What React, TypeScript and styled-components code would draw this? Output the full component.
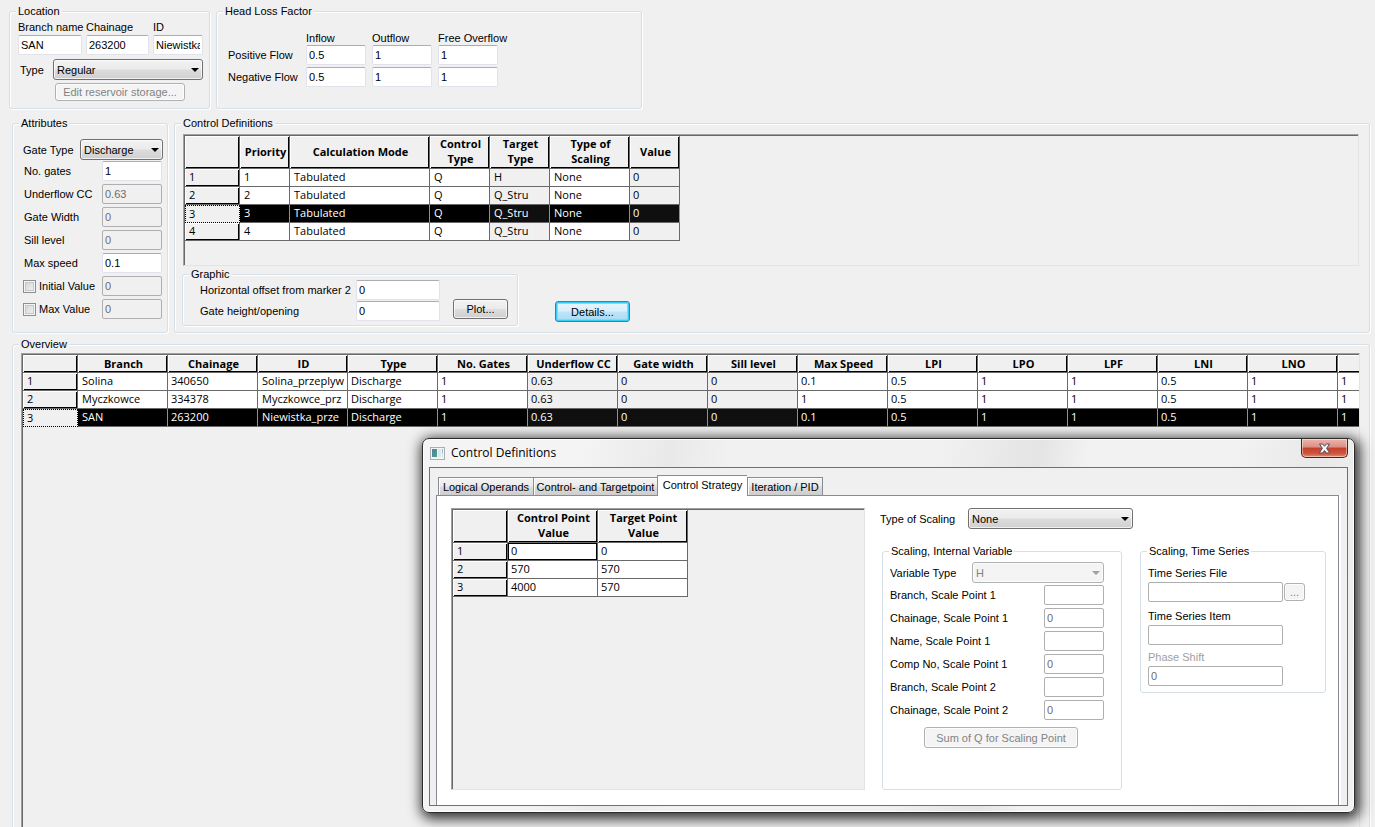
import React, { useId } from "react";
import styled, { createGlobalStyle, css } from "styled-components";

const FACE = "#f0f0f0";
const UI_FONT = '"Liberation Sans", Arial, sans-serif';
const GRID_FONT = '"Open Sans", "Noto Sans", sans-serif';

const GlobalStyle = createGlobalStyle`
  *, *::before, *::after { box-sizing: border-box; }
  body {
    margin: 0;
    background: ${FACE};
    color: #000;
    font: 11px/14px ${UI_FONT};
  }
  input, select, button { font: inherit; color: inherit; margin: 0; }
`;

/* ---------- page structure ---------- */

const Screen = styled.main`
  position: relative;
  height: 100vh;
  padding: 4px 5px 0 9px;
  display: flex;
  flex-direction: column;
  gap: 7px;
  overflow: hidden;
`;

const TopRow = styled.div`
  display: flex;
  gap: 6px;
  flex: none;
`;

const MiddleRow = styled(TopRow)`
  padding-left: 3px;
`;

const OverviewRow = styled(MiddleRow)`
  margin-top: -3px;
`;

/* ---------- group box ---------- */

const Group = styled.fieldset<{ $width?: number; $height?: number; $plain?: boolean }>`
  margin: 0;
  padding: 0;
  min-width: 0;
  border: 1px solid #d5dfe5;
  border-radius: 3px;
  ${(p) => (p.$width ? `flex: none; width: ${p.$width}px;` : "flex: 1;")}
  ${(p) => p.$height && `min-height: ${p.$height}px;`}
  ${(p) => !p.$plain && "box-shadow: 1px 1px 0 #fff, inset 1px 1px 0 #fff;"}
`;

const Legend = styled.legend<{ $plain?: boolean }>`
  margin-left: 6px;
  padding: 0 2px;
  line-height: 15px;
  background: ${(p) => (p.$plain ? "#fff" : FACE)};
`;

/* ---------- controls ---------- */

const TextBox = styled.input<{ $paper?: boolean }>`
  width: 100%;
  min-width: 0;
  height: 20px;
  padding: 0 2px;
  border: 1px solid #e2e3ea;
  border-top-color: #abadb3;
  border-radius: 2px;
  background: #fff;
  outline: none;
  &:disabled {
    border-color: #afafaf;
    background: ${(p) => (p.$paper ? "#fff" : FACE)};
    color: #6d6d6d;
  }
`;

const SelectFrame = styled.span<{ $disabled?: boolean }>`
  position: relative;
  display: block;
  &::after {
    content: "";
    position: absolute;
    right: 4px;
    top: 9px;
    border: 4px solid transparent;
    border-top-color: ${(p) => (p.$disabled ? "#a0a0a0" : "#000")};
    border-bottom: 0;
    pointer-events: none;
  }
`;

const SelectBox = styled.select`
  appearance: none;
  display: block;
  width: 100%;
  height: 21px;
  padding: 0 14px 0 3px;
  border: 1px solid #707070;
  border-radius: 3px;
  background: linear-gradient(#f2f2f2, #ebebeb 48%, #dddddd 52%, #cfcfcf);
  box-shadow: inset 0 0 0 1px rgba(255, 255, 255, 0.7);
  outline: none;
  &:disabled {
    border-color: #adb2b5;
    background: #f4f4f4;
    color: #838383;
    opacity: 1;
  }
`;

const PushButton = styled.button<{ $primary?: boolean }>`
  height: 20px;
  padding: 0;
  border: 1px solid #707070;
  border-radius: 3px;
  background: linear-gradient(#f2f2f2, #ebebeb 48%, #dddddd 52%, #cfcfcf);
  box-shadow: inset 0 0 0 1px rgba(255, 255, 255, 0.7);
  white-space: nowrap;
  ${(p) =>
    p.$primary &&
    css`
      height: 21px;
      border-color: #3c7fb1;
      background: linear-gradient(#e9f5fc, #d8effb 48%, #bde5f9 52%, #aad9f2);
      box-shadow: inset 0 0 0 1px #35cdf8, inset 0 0 0 2px #7fdcf8;
    `}
  &:disabled {
    border-color: #adb2b5;
    background: #f4f4f4;
    color: #838383;
  }
`;

const CheckBox = styled.input`
  appearance: none;
  width: 13px;
  height: 13px;
  border: 1px solid #8e8f8f;
  background: linear-gradient(135deg, #cbcfd5, #f6f6f6);
  box-shadow: inset 0 0 0 1px #f4f4f4, inset 0 0 0 2px #c4c8cd;
`;

const Caption = styled.label<{ $muted?: boolean }>`
  white-space: nowrap;
  color: ${(p) => (p.$muted ? "#a0a0a0" : "inherit")};
`;

/* ---------- location and head loss ---------- */

const LocationBody = styled.div`
  padding: 1px 5px 7px 8px;
`;

const LocationFields = styled.div`
  display: grid;
  grid-template-columns: 64px 63px 50px;
  column-gap: 4px;
  row-gap: 1px;
`;

const TypeRow = styled.div`
  display: grid;
  grid-template-columns: 33px 150px;
  align-items: center;
  padding-left: 2px;
  margin: 4px 0 3px;
`;

const ReservoirButton = styled(PushButton)`
  display: block;
  width: 130px;
  height: 18px;
  margin-left: 37px;
`;

const LossTable = styled.div`
  display: grid;
  grid-template-columns: 72px repeat(3, 60px);
  grid-template-rows: 26px 22px 20px;
  column-gap: 6px;
  align-items: start;
  padding-left: 11px;
`;

const LossHead = styled.span`
  align-self: end;
  white-space: nowrap;
  line-height: 13px;
`;

const LossLabel = styled.span`
  white-space: nowrap;
  line-height: 20px;
`;

/* ---------- attributes ---------- */

const AttributeBody = styled.div`
  padding: 8px 4px 0 10px;
`;

const GateTypeRow = styled.div`
  display: grid;
  grid-template-columns: 57px 83px;
  align-items: center;
  margin-bottom: 1px;
`;

const FieldRow = styled.div<{ $box: number }>`
  display: grid;
  grid-template-columns: 1fr ${(p) => p.$box}px;
  align-items: start;
  height: 23px;
  padding: 0 1px;
  line-height: 20px;
`;

const CheckCaption = styled.span`
  display: flex;
  align-items: center;
  gap: 3px;
  height: 20px;
  margin-left: -1px;
`;

/* ---------- data grids ---------- */

const GridPanel = styled.div<{ $height: number; $width?: number }>`
  ${(p) => (p.$width ? `flex: none; width: ${p.$width}px;` : "")}
  height: ${(p) => p.$height}px;
  border: 1px solid #e3e3e3;
  border-top-color: #a0a0a0;
  border-left-color: #a0a0a0;
  box-shadow: inset 1px 1px 0 #696969;
  padding: 1px 0 0 1px;
  background: ${FACE};
  overflow: hidden;
`;

const DataTable = styled.table`
  table-layout: fixed;
  width: 0;
  border-collapse: separate;
  border-spacing: 0;
  font: 11px/15px ${GRID_FONT};
`;

const HeadCell = styled.th<{ $tall?: boolean }>`
  height: ${(p) => (p.$tall ? 33 : 18)}px;
  padding: 0 0 ${(p) => (p.$tall ? 2 : 0)}px 2px;
  font-weight: 700;
  text-align: center;
  border: solid #696969;
  border-width: 0 1px 1px 0;
  box-shadow: inset 1px 1px 0 #fff, inset -1px -1px 0 #000;
  white-space: ${(p) => (p.$tall ? "pre-line" : "nowrap")};
  overflow: hidden;
`;

const RowHead = styled.th<{ $active?: boolean }>`
  height: 18px;
  padding: 0 0 2px 4px;
  font-weight: 400;
  text-align: left;
  border: solid #696969;
  border-width: 0 1px 1px 0;
  box-shadow: inset 1px 1px 0 #fff, inset -1px -1px 0 #000;
  ${(p) =>
    p.$active &&
    css`
      border: 1px dotted #000;
      padding: 0 0 1px 3px;
      box-shadow: none;
    `}
`;

const Cell = styled.td<{ $locked?: boolean; $selected?: boolean; $current?: boolean; $tight?: boolean }>`
  height: 18px;
  padding: 0 0 2px ${(p) => (p.$tight ? 3 : 4)}px;
  border: solid #696969;
  border-width: 0 1px 1px 0;
  white-space: nowrap;
  overflow: hidden;
  background: ${(p) => (p.$selected ? (p.$locked ? "#0f0f0f" : "#000") : p.$locked ? FACE : "#fff")};
  color: ${(p) => (p.$selected ? "#fff" : "#000")};
  ${(p) => p.$selected && "border-right-color: #909090;"}
  ${(p) => p.$current && "box-shadow: inset 0 0 0 1px #000;"}
`;

type Column = { title: string; width: number; locked?: boolean; tight?: boolean };

type DataGridProps = {
  label: string;
  columns: Column[];
  rows: string[][];
  tall?: boolean;
  selected?: number;
  current?: boolean;
};

function DataGrid({ label, columns, rows, tall, selected, current }: DataGridProps) {
  return (
    <DataTable aria-label={label}>
      <colgroup>
        <col width={55} />
        {columns.map((c, i) => (
          <col key={i} width={c.width} />
        ))}
      </colgroup>
      <thead>
        <tr>
          <HeadCell as="td" $tall={tall} />
          {columns.map((c, i) => (
            <HeadCell key={i} scope="col" $tall={tall}>
              {c.title}
            </HeadCell>
          ))}
        </tr>
      </thead>
      <tbody>
        {rows.map((row, r) => (
          <tr key={r}>
            <RowHead scope="row" $active={selected === r}>
              {r + 1}
            </RowHead>
            {row.map((value, c) => (
              <Cell
                key={c}
                $locked={columns[c].locked}
                $tight={columns[c].tight}
                $selected={selected === r}
                $current={current && r === 0 && c === 0}
              >
                {value}
              </Cell>
            ))}
          </tr>
        ))}
      </tbody>
    </DataTable>
  );
}

/* ---------- control definitions ---------- */

const ControlBody = styled.div`
  padding: 3px 10px 6px 8px;
`;

const ControlFooter = styled.div`
  display: flex;
  align-items: flex-end;
  gap: 37px;
  margin: 1px 0 0 -1px;
`;

const GraphicBody = styled.div`
  display: flex;
  align-items: flex-end;
  gap: 13px;
  margin-top: -2px;
  padding: 0 0 4px 17px;
`;

const GraphicFields = styled.div`
  display: grid;
  grid-template-columns: 156px 84px;
  grid-auto-rows: 20px;
  row-gap: 1px;
  align-items: center;
`;

const PlotButton = styled(PushButton)`
  width: 55px;
  margin-bottom: 2px;
`;

const DetailsButton = styled(PushButton)`
  width: 75px;
  margin-bottom: 4px;
`;

const OverviewBody = styled.div`
  padding: 1px 9px 8px 8px;
`;

/* ---------- dialog ---------- */

const Dialog = styled.section`
  position: absolute;
  left: 422px;
  right: 20px;
  top: 438px;
  padding: 0 6px 6px;
  border: 1px solid #2b2b2b;
  border-radius: 7px;
  background: linear-gradient(100deg, #f4f4f4 0 16%, #e9e9e9 25%, #f1f1f1 31% 52%, #e4e4e4 62%, #f2f2f2 67% 82%, #e9e9e9 90%, #f2f2f2);
  box-shadow: inset 0 0 0 1px #fff, 2px 3px 13px 3px rgba(0, 0, 0, 0.8);
`;

const TitleBar = styled.header`
  display: flex;
  align-items: center;
  gap: 6px;
  height: 28px;
  padding-left: 1px;
`;

const Title = styled.h1`
  flex: 1;
  margin: 0;
  font: 12px/16px ${GRID_FONT};
`;

const CloseButton = styled.button`
  align-self: flex-start;
  display: grid;
  place-items: center;
  width: 47px;
  height: 19px;
  padding: 0;
  border: 1px solid #5a1d16;
  border-top: 0;
  border-radius: 0 0 5px 5px;
  background: linear-gradient(#eeb5ac, #dd8f82 45%, #c3402a 50%, #d0543c 80%, #e58a72);
  box-shadow: inset 0 0 0 1px rgba(255, 255, 255, 0.45);
`;

const Client = styled.div`
  border: 1px solid #707070;
  background: ${FACE};
  padding: 7px 8px 0 6px;
`;

const TabStrip = styled.div`
  display: flex;
  align-items: flex-end;
  height: 20px;
  padding-left: 2px;
`;

const Tab = styled.button<{ $width: number; $active?: boolean }>`
  width: ${(p) => p.$width}px;
  height: 18px;
  padding: 0;
  border: 1px solid #898c95;
  border-bottom: 0;
  border-right-width: 0;
  background: linear-gradient(#f3f3f3, #ebebeb 48%, #dddddd 52%, #cdcdcd);
  box-shadow: inset 1px 1px 0 #fcfcfc;
  white-space: nowrap;
  &:last-child {
    border-right-width: 1px;
  }
  ${(p) =>
    p.$active &&
    css`
      position: relative;
      height: 21px;
      margin-bottom: -1px;
      padding-bottom: 2px;
      background: #fff;
    `}
`;

const TabPage = styled.div`
  display: flex;
  align-items: flex-start;
  gap: 15px;
  height: 310px;
  padding: 12px 12px 0 14px;
  border: 1px solid #898c95;
  border-bottom: 0;
  background: #fff;
  box-shadow: 2px 0 0 #fff;
`;

const ScalingPane = styled.div`
  flex: 1;
  min-width: 0;
`;

const ScalingRow = styled.div`
  display: grid;
  grid-template-columns: 88px 165px;
  align-items: center;
  margin-bottom: 15px;
`;

const ScalingGroups = styled.div`
  display: flex;
  align-items: flex-start;
  gap: 18px;
  padding-left: 2px;
`;

const VariableBody = styled.div`
  padding: 3px 16px 0 6px;
`;

const VariableRow = styled.div`
  display: grid;
  grid-template-columns: 1fr 132px;
  align-items: center;
  margin-bottom: 2px;
  padding: 0 1px;
`;

const SumButton = styled(PushButton)`
  display: block;
  width: 154px;
  height: 21px;
  margin: 4px 0 0 35px;
`;

const SeriesBody = styled.div`
  display: grid;
  grid-template-columns: 135px 21px;
  column-gap: 1px;
  grid-template-rows: 17px 20px 23px 20px 21px 20px;
  align-items: center;
  padding: 6px 0 0 7px;
  > label {
    grid-column: 1 / -1;
    align-self: end;
    padding-bottom: 2px;
  }
  > input { grid-column: 1; }
`;

const BrowseButton = styled(PushButton)`
  height: 18px;
  color: #838383;
`;

/* ---------- small composites ---------- */

function Select({ id, value, disabled }: { id: string; value: string; disabled?: boolean }) {
  return (
    <SelectFrame $disabled={disabled}>
      <SelectBox id={id} disabled={disabled} defaultValue={value}>
        <option>{value}</option>
      </SelectBox>
    </SelectFrame>
  );
}

type FieldProps = { label: string; value: string; disabled?: boolean; check?: boolean; paper?: boolean };

function Field({ label, value, disabled, check, paper }: FieldProps) {
  const id = useId();
  return (
    <FieldRow $box={60}>
      {check ? (
        <CheckCaption>
          <CheckBox type="checkbox" id={id + "c"} />
          <Caption htmlFor={id + "c"}>{label}</Caption>
        </CheckCaption>
      ) : (
        <Caption htmlFor={id}>{label}</Caption>
      )}
      <TextBox id={id} defaultValue={value} disabled={disabled} $paper={paper} aria-label={label} />
    </FieldRow>
  );
}

function AppIcon() {
  return (
    <svg width="15" height="13" viewBox="0 0 15 13" aria-hidden="true">
      <defs>
        <linearGradient id="pane" x1="0" y1="0" x2="1" y2="1">
          <stop offset="0" stopColor="#4f7fa8" />
          <stop offset="1" stopColor="#4fa07c" />
        </linearGradient>
      </defs>
      <rect x="0.5" y="0.5" width="14" height="12" fill="#f2f4f5" stroke="#a9afb4" />
      <rect x="2" y="2" width="5" height="8" fill="url(#pane)" />
      <rect x="8" y="2" width="3" height="8" fill="#dfe6ea" />
      <rect x="12" y="2" width="1" height="4" fill="#9fb9cc" />
      <rect x="12" y="6" width="1" height="4" fill="#d5e3dc" />
    </svg>
  );
}

function CloseIcon() {
  return (
    <svg width="13" height="11" viewBox="0 0 13 11" aria-hidden="true">
      <path
        d="M1.500 1h3.200l1.800 2.300L8.300 1h3.200L8.600 5.300 11.700 10H8.300L6.500 7.500 4.700 10H1.300l3.100-4.700z"
        fill="#f6f6f6"
        stroke="#4d4f63"
        strokeWidth="1"
      />
    </svg>
  );
}

/* ---------- data ---------- */

const controlColumns: Column[] = [
  { title: "Priority", width: 50 },
  { title: "Calculation Mode", width: 140 },
  { title: "Control\nType", width: 60 },
  { title: "Target\nType", width: 60, locked: true },
  { title: "Type of\nScaling", width: 80 },
  { title: "Value", width: 50, locked: true, tight: true },
];

const controlRows = [
  ["1", "Tabulated", "Q", "H", "None", "0"],
  ["2", "Tabulated", "Q", "Q_Stru", "None", "0"],
  ["3", "Tabulated", "Q", "Q_Stru", "None", "0"],
  ["4", "Tabulated", "Q", "Q_Stru", "None", "0"],
];

const overviewColumns: Column[] = [
  "Branch", "Chainage", "ID", "Type", "No. Gates", "Underflow CC", "Gate width", "Sill level",
  "Max Speed", "LPI", "LPO", "LPF", "LNI", "LNO", "",
].map((title, i) => ({
  title,
  width: 90,
  locked: i >= 5 && i <= 7,
  tight: title !== "Branch" && title !== "ID",
}));

const overviewRows = [
  ["Solina", "340650", "Solina_przeplyw", "Discharge", "1", "0.63", "0", "0", "0.1", "0.5", "1", "1", "0.5", "1", "1"],
  ["Myczkowce", "334378", "Myczkowce_prz", "Discharge", "1", "0.63", "0", "0", "1", "0.5", "1", "1", "0.5", "1", "1"],
  ["SAN", "263200", "Niewistka_prze", "Discharge", "1", "0.63", "0", "0", "0.1", "0.5", "1", "1", "0.5", "1", "1"],
];

const pointColumns: Column[] = [
  { title: "Control Point\nValue", width: 90, tight: true },
  { title: "Target Point\nValue", width: 90, tight: true },
];

const pointRows = [
  ["0", "0"],
  ["570", "570"],
  ["4000", "570"],
];

const scalePoints: [string, string][] = [
  ["Branch, Scale Point 1", ""],
  ["Chainage, Scale Point 1", "0"],
  ["Name, Scale Point 1", ""],
  ["Comp No, Scale Point 1", "0"],
  ["Branch, Scale Point 2", ""],
  ["Chainage, Scale Point 2", "0"],
];

/* ---------- sections ---------- */

function LocationGroup() {
  return (
    <Group $width={201} $height={105}>
      <Legend>Location</Legend>
      <LocationBody>
        <LocationFields>
          <Caption htmlFor="branch">Branch name</Caption>
          <Caption htmlFor="chainage">Chainage</Caption>
          <Caption htmlFor="locid">ID</Caption>
          <TextBox id="branch" defaultValue="SAN" />
          <TextBox id="chainage" defaultValue="263200" />
          <TextBox id="locid" defaultValue="Niewistka_prze" />
        </LocationFields>
        <TypeRow>
          <Caption htmlFor="type">Type</Caption>
          <Select id="type" value="Regular" />
        </TypeRow>
        <ReservoirButton disabled>Edit reservoir storage...</ReservoirButton>
      </LocationBody>
    </Group>
  );
}

function HeadLossGroup() {
  const heads = ["Inflow", "Outflow", "Free Overflow"];
  const values = ["0.5", "1", "1"];
  return (
    <Group $width={426} $height={105}>
      <Legend>Head Loss Factor</Legend>
      <LossTable>
        <span />
        {heads.map((h) => (
          <LossHead key={h}>{h}</LossHead>
        ))}
        {["Positive Flow", "Negative Flow"].map((flow) => (
          <React.Fragment key={flow}>
            <LossLabel>{flow}</LossLabel>
            {values.map((v, i) => (
              <TextBox key={i} defaultValue={v} aria-label={`${flow} ${heads[i]}`} />
            ))}
          </React.Fragment>
        ))}
      </LossTable>
    </Group>
  );
}

function AttributesGroup() {
  return (
    <Group $width={156}>
      <Legend>Attributes</Legend>
      <AttributeBody>
        <GateTypeRow>
          <Caption htmlFor="gate">Gate Type</Caption>
          <Select id="gate" value="Discharge" />
        </GateTypeRow>
        <Field label="No. gates" value="1" />
        <Field label="Underflow CC" value="0.63" disabled />
        <Field label="Gate Width" value="0" disabled />
        <Field label="Sill level" value="0" disabled />
        <Field label="Max speed" value="0.1" />
        <Field label="Initial Value" value="0" disabled check />
        <Field label="Max Value" value="0" disabled check />
      </AttributeBody>
    </Group>
  );
}

function ControlGroup() {
  return (
    <Group>
      <Legend>Control Definitions</Legend>
      <ControlBody>
        <GridPanel $height={132}>
          <DataGrid label="Control definitions" columns={controlColumns} rows={controlRows} tall selected={2} />
        </GridPanel>
        <ControlFooter>
          <Group $width={336}>
            <Legend>Graphic</Legend>
            <GraphicBody>
              <GraphicFields>
                <Caption htmlFor="offset">Horizontal offset from marker 2</Caption>
                <TextBox id="offset" defaultValue="0" />
                <Caption htmlFor="opening">Gate height/opening</Caption>
                <TextBox id="opening" defaultValue="0" />
              </GraphicFields>
              <PlotButton>Plot...</PlotButton>
            </GraphicBody>
          </Group>
          <DetailsButton $primary>Details...</DetailsButton>
        </ControlFooter>
      </ControlBody>
    </Group>
  );
}

function ControlDialog() {
  return (
    <Dialog role="dialog" aria-labelledby="dialog-title">
      <TitleBar>
        <AppIcon />
        <Title id="dialog-title">Control Definitions</Title>
        <CloseButton aria-label="Close">
          <CloseIcon />
        </CloseButton>
      </TitleBar>
      <Client>
        <TabStrip role="tablist">
          <Tab role="tab" $width={95}>Logical Operands</Tab>
          <Tab role="tab" $width={124}>Control- and Targetpoint</Tab>
          <Tab role="tab" $width={90} $active aria-selected>Control Strategy</Tab>
          <Tab role="tab" $width={76}>Iteration / PID</Tab>
        </TabStrip>
        <TabPage role="tabpanel">
          <GridPanel $height={282} $width={414}>
            <DataGrid label="Control strategy" columns={pointColumns} rows={pointRows} tall current />
          </GridPanel>
          <ScalingPane>
            <ScalingRow>
              <Caption htmlFor="scaling">Type of Scaling</Caption>
              <Select id="scaling" value="None" />
            </ScalingRow>
            <ScalingGroups>
              <Group $width={240} $height={246} $plain>
                <Legend $plain>Scaling, Internal Variable</Legend>
                <VariableBody>
                  <VariableRow>
                    <Caption htmlFor="variable">Variable Type</Caption>
                    <Select id="variable" value="H" disabled />
                  </VariableRow>
                  {scalePoints.map(([label, value]) => (
                    <Field key={label} label={label} value={value} disabled paper />
                  ))}
                  <SumButton disabled>Sum of Q for Scaling Point</SumButton>
                </VariableBody>
              </Group>
              <Group $width={186} $height={149} $plain>
                <Legend $plain>Scaling, Time Series</Legend>
                <SeriesBody>
                  <Caption htmlFor="tsfile">Time Series File</Caption>
                  <TextBox id="tsfile" disabled $paper />
                  <BrowseButton disabled aria-label="Browse">...</BrowseButton>
                  <Caption htmlFor="tsitem">Time Series Item</Caption>
                  <TextBox id="tsitem" disabled $paper />
                  <Caption htmlFor="shift" $muted>Phase Shift</Caption>
                  <TextBox id="shift" defaultValue="0" disabled $paper />
                </SeriesBody>
              </Group>
            </ScalingGroups>
          </ScalingPane>
        </TabPage>
      </Client>
    </Dialog>
  );
}

export default function App() {
  return (
    <>
      <GlobalStyle />
      <Screen>
        <TopRow>
          <LocationGroup />
          <HeadLossGroup />
        </TopRow>
        <MiddleRow>
          <AttributesGroup />
          <ControlGroup />
        </MiddleRow>
        <OverviewRow>
          <Group>
            <Legend>Overview</Legend>
            <OverviewBody>
              <GridPanel $height={500}>
                <DataGrid label="Overview" columns={overviewColumns} rows={overviewRows} selected={2} />
              </GridPanel>
            </OverviewBody>
          </Group>
        </OverviewRow>
        <ControlDialog />
      </Screen>
    </>
  );
}
